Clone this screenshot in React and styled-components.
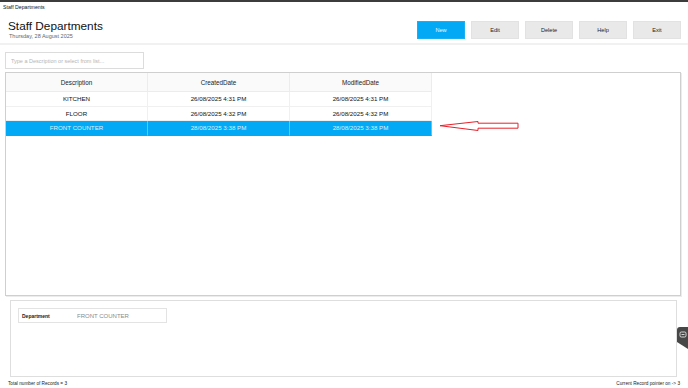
import React from 'react';
import styled, { createGlobalStyle } from 'styled-components';

const GlobalStyle = createGlobalStyle`
  html, body {
    margin: 0;
    padding: 0;
    background: #fff;
  }
  body {
    font-family: 'Liberation Sans', Arial, sans-serif;
  }
`;

const Page = styled.div`
  position: relative;
  display: flex;
  flex-direction: column;
  width: 688px;
  height: 388px;
  box-sizing: border-box;
  border-top: 2px solid #3c3c3c;
  overflow: hidden;
`;

const TitleBar = styled.div`
  height: 10px;
  padding-left: 3px;
  color: #111;
  font-size: 5.2px;
  line-height: 10px;
`;

const Header = styled.div`
  display: flex;
  justify-content: space-between;
  align-items: flex-start;
  height: 33px;
  padding: 7px 7px 0 8px;
  box-sizing: border-box;
  border-bottom: 2px solid #f1f1f1;
`;

const TitleBlock = styled.div`
  display: flex;
  flex-direction: column;
`;

const Title = styled.h1`
  margin: 0;
  color: #111;
  font-size: 11.8px;
  font-weight: 400;
  line-height: 14px;
`;

const SubTitle = styled.span`
  margin-left: 1px;
  color: #666;
  font-size: 5.5px;
  line-height: 7px;
`;

const Buttons = styled.div`
  display: flex;
  gap: 6px;
  margin-top: 2px;
`;

const Button = styled.button`
  width: 48px;
  height: 18px;
  padding: 0;
  border: 1px solid ${props => props.primary ? '#1aaef2' : '#e2e2e2'};
  background: ${props => props.primary ? '#03a9f4' : '#e9e9e9'};
  color: ${props => props.primary ? '#e8f7ff' : '#222'};
  font: 400 5.6px 'Liberation Sans', Arial, sans-serif;
  outline: none;
  cursor: pointer;
`;

const Search = styled.input`
  width: 139px;
  height: 17px;
  margin: 7px 0 0 5px;
  padding: 0 0 0 5px;
  box-sizing: border-box;
  border: 1px solid #dcdcdc;
  outline: none;
  font: 400 5.5px 'Liberation Sans', Arial, sans-serif;
  color: #333;

  &::placeholder {
    color: #b5b5b5;
  }
`;

const GridBox = styled.div`
  position: relative;
  height: 224px;
  margin: 3px 7px 0 5px;
  box-sizing: border-box;
  border: 1px solid #cfcfcf;
  box-shadow: 1px 1px 0 #ececec;
`;

const Table = styled.div`
  display: grid;
  grid-template-columns: repeat(3, 142px);
  grid-template-rows: 19px;
  grid-auto-rows: 14.5px;
  width: 426px;
`;

const HeadCell = styled.div`
  display: flex;
  align-items: center;
  justify-content: center;
  box-sizing: border-box;
  background: #fafafa;
  border-right: 1px solid #ececec;
  border-bottom: 1px solid #ececec;
  color: #222;
  font-size: 6.3px;
`;

const Cell = styled.div`
  display: flex;
  align-items: center;
  justify-content: center;
  box-sizing: border-box;
  background: ${props => props.selected ? '#03a9f4' : '#fff'};
  border-right: 1px solid ${props => props.selected ? '#5ec6f6' : '#f0f0f0'};
  border-bottom: 1px solid ${props => props.selected ? '#03a9f4' : '#f0f0f0'};
  color: ${props => props.selected ? '#d8f2ff' : '#111'};
  font-size: 6.2px;
`;

const Arrow = styled.svg`
  position: absolute;
  left: 428px;
  top: 45px;
`;

const Panel = styled.div`
  height: 77px;
  margin: 4px 11px 0 10px;
  padding: 7px;
  box-sizing: border-box;
  border: 1px solid #dedede;
`;

const Field = styled.div`
  display: flex;
  align-items: center;
  width: 149px;
  height: 15px;
  padding-left: 3px;
  box-sizing: border-box;
  border: 1px solid #e3e3e3;
`;

const Label = styled.span`
  width: 55px;
  color: #222;
  font-size: 5px;
  font-weight: 700;
`;

const Value = styled.span`
  color: #8a8a8a;
  font-size: 6px;
`;

const Footer = styled.div`
  display: flex;
  justify-content: space-between;
  align-items: center;
  flex: 1;
  padding: 2px 8px 0 8px;
  color: #222;
  font-size: 4.7px;
`;

const SideTab = styled.svg`
  position: absolute;
  right: 0;
  top: 325px;
`;

const records = [
  { description: 'KITCHEN', created: '26/08/2025 4:31 PM', modified: '26/08/2025 4:31 PM' },
  { description: 'FLOOR', created: '26/08/2025 4:32 PM', modified: '26/08/2025 4:32 PM' },
  { description: 'FRONT COUNTER', created: '28/08/2025 3:38 PM', modified: '28/08/2025 3:38 PM' },
];

const selectedIndex = 2;

const App = () => (
  <Page>
    <GlobalStyle />
    <TitleBar>Staff Departments</TitleBar>
    <Header>
      <TitleBlock>
        <Title>Staff Departments</Title>
        <SubTitle>Thursday, 28 August 2025</SubTitle>
      </TitleBlock>
      <Buttons>
        <Button primary>New</Button>
        <Button>Edit</Button>
        <Button>Delete</Button>
        <Button>Help</Button>
        <Button>Exit</Button>
      </Buttons>
    </Header>
    <Search placeholder="Type a Description or select from list..." />
    <GridBox>
      <Table>
        <HeadCell>Description</HeadCell>
        <HeadCell>CreatedDate</HeadCell>
        <HeadCell>ModifiedDate</HeadCell>
        {records.map((r, i) => (
          <React.Fragment key={r.description}>
            <Cell selected={i === selectedIndex}>{r.description}</Cell>
            <Cell selected={i === selectedIndex}>{r.created}</Cell>
            <Cell selected={i === selectedIndex}>{r.modified}</Cell>
          </React.Fragment>
        ))}
      </Table>
      <Arrow width="90" height="16" viewBox="0 0 90 16">
        <polygon
          points="6,7.7 44,3.5 44,5.2 84,5.2 84,10.2 44,10.2 44,12.5"
          fill="#fff"
          stroke="#e8202a"
          strokeWidth="1"
          strokeLinejoin="miter"
        />
      </Arrow>
    </GridBox>
    <Panel>
      <Field>
        <Label>Department</Label>
        <Value>FRONT COUNTER</Value>
      </Field>
    </Panel>
    <Footer>
      <span>Total number of Records = 3</span>
      <span>Current Record pointer on -&gt; 3</span>
    </Footer>
    <SideTab width="11" height="22" viewBox="0 0 11 22">
      <path d="M3,0 H11 V22 L0,15 V3 Q0,0 3,0 Z" fill="#474747" />
      <rect x="3" y="5" width="6" height="5" rx="1.3" fill="none" stroke="#e6e6e6" strokeWidth="0.9" />
      <line x1="4.5" y1="7.5" x2="7.5" y2="7.5" stroke="#e6e6e6" strokeWidth="0.9" />
    </SideTab>
  </Page>
);

export default App;
